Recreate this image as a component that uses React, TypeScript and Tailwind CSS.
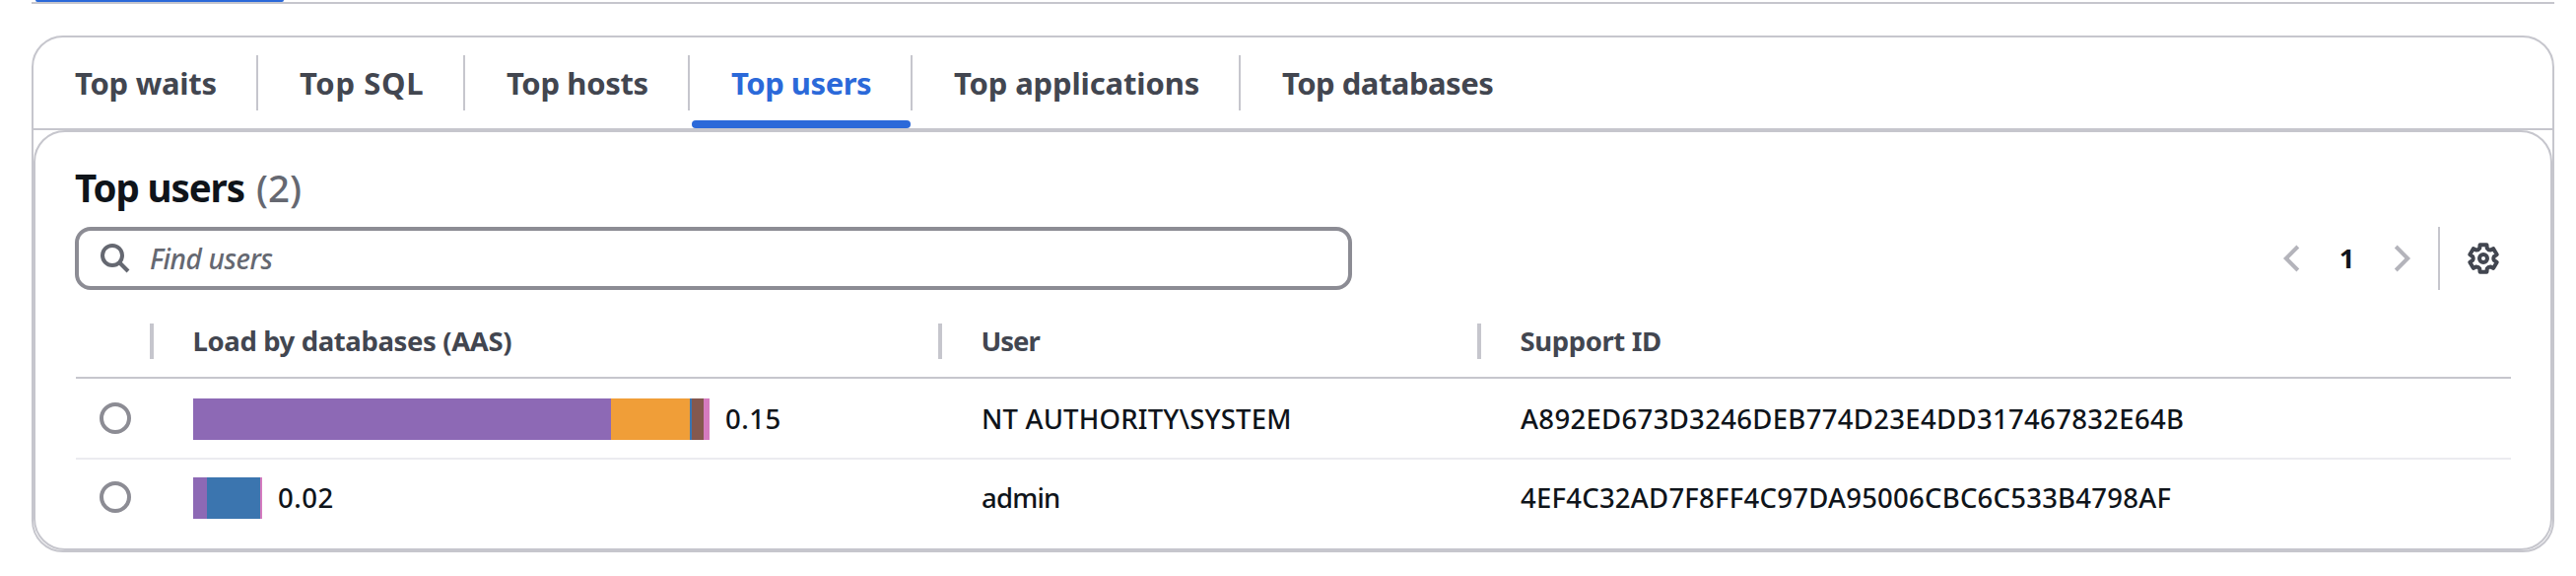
const tabs = [
  { label: "Top waits", width: "w-[228px]", tracking: "tracking-[-0.25px]" },
  { label: "Top SQL", width: "w-[210px]", tracking: "tracking-[0.65px]" },
  { label: "Top hosts", width: "w-[228px]", tracking: "tracking-[-0.35px]" },
  { label: "Top users", width: "w-[226px]", tracking: "tracking-[-0.47px]", active: true },
  { label: "Top applications", width: "w-[333px]", tracking: "tracking-[-0.14px]" },
  { label: "Top databases", width: "w-[300px]", tracking: "tracking-[-0.5px]", last: true },
];

const rows = [
  {
    load: "0.15",
    user: "NT AUTHORITY\\SYSTEM",
    userTracking: "tracking-[0.17px]",
    id: "A892ED673D3246DEB774D23E4DD317467832E64B",
    idTracking: "tracking-[0.32px]",
    segments: [
      { width: 424, color: "bg-[#8d69b5]" },
      { width: 80, color: "bg-[#f09e38]" },
      { width: 2, color: "bg-[#3b75af]" },
      { width: 12, color: "bg-[#84584e]" },
      { width: 6, color: "bg-[#d57bbf]" },
    ],
  },
  {
    load: "0.02",
    user: "admin",
    userTracking: "tracking-[-0.8px]",
    id: "4EF4C32AD7F8FF4C97DA95006CBC6C533B4798AF",
    idTracking: "tracking-[0.23px]",
    segments: [
      { width: 14, color: "bg-[#8d69b5]" },
      { width: 54, color: "bg-[#3b75af]" },
      { width: 2, color: "bg-[#d57bbf]" },
    ],
  },
];

function Chevron({ right = false }: { right?: boolean }) {
  return (
    <svg width="32" height="32" viewBox="0 0 16 16" fill="none" stroke="#b4b4bb" strokeWidth="2">
      <path d={right ? "M4.6 2 10.6 8l-6 6" : "M11.4 2 5.4 8l6 6"} />
    </svg>
  );
}

function Gear() {
  const teeth = Array.from({ length: 6 }, (_, i) => {
    const at = (deg: number, r: number) => {
      const a = ((i * 60 + deg - 90) * Math.PI) / 180;
      return `${(16 + r * Math.cos(a)).toFixed(2)} ${(16 + r * Math.sin(a)).toFixed(2)}`;
    };
    return `${i ? "L" : "M"}${at(-14, 14.2)}L${at(14, 14.2)}L${at(20, 11)}Q${at(30, 9.8)} ${at(40, 11)}`;
  }).join("");
  return (
    <svg width="32" height="32" viewBox="0 0 32 32" fill="none" stroke="#424650" strokeWidth="4" strokeLinejoin="round">
      <path d={teeth + "Z"} />
      <circle cx="16" cy="16" r="4" />
    </svg>
  );
}

function HeadCell({ label, className }: { label: string; className: string }) {
  return (
    <div className={`flex items-center ${className}`}>
      <span className="h-9 w-1 bg-[#c6c6cd]" />
      <span className="pl-[39.5px] font-bold">{label}</span>
    </div>
  );
}

export default function App() {
  return (
    <div className="h-[584px] w-[2614px] overflow-hidden bg-white pr-[22px] pl-8 font-['Noto_Sans','Open_Sans',sans-serif] whitespace-nowrap text-[#0f141a]">
      <div className="h-1 border-b-2 border-[#c6c6cd] pl-1">
        <div className="h-0.5 w-[252px] rounded-b-sm bg-[#2b69d9]" />
      </div>

      <div className="mt-8 h-[524px] rounded-[32px] border-2 border-[#c6c6cd]">
        <div className="flex h-[94px] border-b-2 border-[#c6c6cd]">
          {tabs.map((t) => (
            <div key={t.label} className={`relative flex items-center ${t.width}`}>
              <span className={`flex-1 pl-[42px] text-[31px] leading-10 font-bold ${t.tracking} ${t.active ? "text-[#2b69d9]" : "text-[#424650]"}`}>
                {t.label}
              </span>
              {!t.last && <span className="h-14 w-0.5 bg-[#c6c6cd]" />}
              {t.active && <span className="absolute right-0.5 bottom-0 left-0.5 h-2 rounded bg-[#2b69d9]" />}
            </div>
          ))}
        </div>

        <div className="flex h-[426px] flex-col rounded-[32px] border-2 border-[#c6c6cd] px-10 pt-8">
          <h2 className="flex h-12 items-center text-[38.5px] leading-[48px]">
            <span className="font-bold tracking-[-1.1px]">Top users</span>
            <span className="ml-3 font-medium text-[#656871]">(2)</span>
          </h2>

          <div className="mt-4 flex h-16 items-center">
            <div className="flex h-16 w-[1296px] items-center rounded-2xl border-4 border-[#8c8c94] pl-[21px]">
              <svg width="32" height="32" viewBox="0 0 32 32" fill="none" stroke="#656871" strokeWidth="4">
                <circle cx="13" cy="13" r="10" />
                <path d="M20 20 29 29" />
              </svg>
              <span className="pl-[19px] text-[28px] leading-10 font-medium tracking-[-0.4px] text-[#656871] italic">Find users</span>
            </div>
            <div className="ml-auto flex h-16 items-center pr-3">
              <Chevron />
              <span className="w-[81px] text-center text-[27.5px] font-bold">1</span>
              <Chevron right />
              <span className="ml-5 h-16 w-0.5 bg-[#c6c6cd]" />
              <span className="ml-7">
                <Gear />
              </span>
            </div>
          </div>

          <div className="mt-4 ml-px flex h-[74px] border-b-2 border-[#c6c6cd] pl-[75px] text-[27.5px] text-[#424650]">
            <HeadCell label="Load by databases (AAS)" className="w-[800px] tracking-[-0.38px]" />
            <HeadCell label="User" className="w-[547px] tracking-[-1px]" />
            <HeadCell label="Support ID" className="tracking-[-0.4px]" />
          </div>

          {rows.map((r, i) => (
            <div key={r.id} className={`ml-px flex items-center text-[27.5px] font-medium ${i === 0 ? "h-[82px] border-b-2 border-[#ebebf0]" : "h-[76px]"}`}>
              <div className="w-[119px] pl-6">
                <div className="size-8 rounded-full border-4 border-[#8c8c94]" />
              </div>
              <div className="flex w-[800px] items-center pt-0.5">
                {r.segments.map((s, j) => (
                  <div key={j} className={`h-[42px] ${s.color}`} style={{ width: s.width }} />
                ))}
                <span className="pl-4 tracking-[0.5px]">{r.load}</span>
              </div>
              <div className={`w-[547px] pt-0.5 ${r.userTracking}`}>{r.user}</div>
              <div className={`pt-0.5 ${r.idTracking}`}>{r.id}</div>
            </div>
          ))}
        </div>
      </div>
    </div>
  );
}
